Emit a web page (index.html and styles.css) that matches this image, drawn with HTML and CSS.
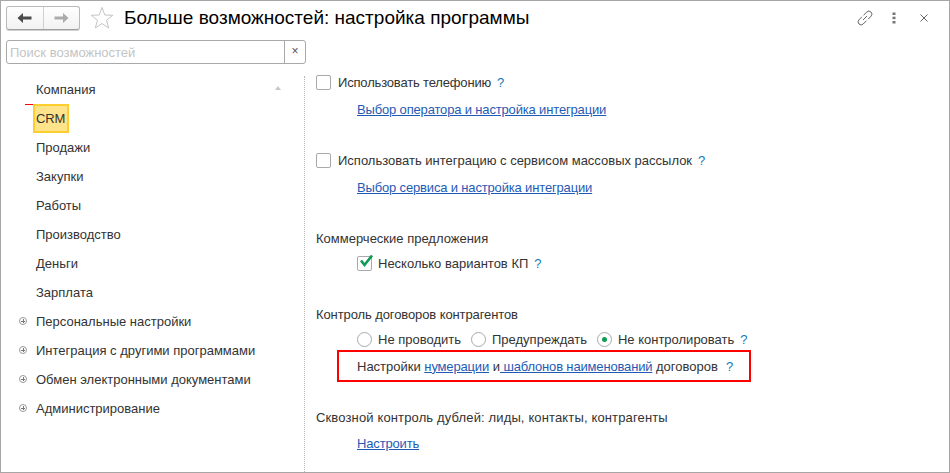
FILE: index.html
```html
<!DOCTYPE html>
<html lang="ru">
<head>
<meta charset="utf-8">
<title>Больше возможностей: настройка программы</title>
<link rel="stylesheet" href="styles.css">
</head>
<body>
<div class="window">
  <header class="titlebar">
    <div class="navgroup">
      <button class="navbtn" aria-label="Назад"><svg width="16" height="12" viewBox="0 0 16 12"><path d="M0.5 6 L6 1 V4.5 H14.5 V7.5 H6 V11 Z" fill="#4a4a4a"/></svg></button>
      <button class="navbtn navbtn-last" aria-label="Вперёд"><svg width="16" height="12" viewBox="0 0 16 12"><path d="M15.5 6 L10 1 V4.5 H1.5 V7.5 H10 V11 Z" fill="#ababab"/></svg></button>
    </div>
    <svg class="star" width="24" height="24" viewBox="0 0 24 24"><path d="M12 1.5 L14.8 9 L22.8 9.3 L16.5 14.2 L18.7 22 L12 17.5 L5.3 22 L7.5 14.2 L1.2 9.3 L9.2 9 Z" fill="none" stroke="#c4c4c4" stroke-width="1"/></svg>
    <h1 class="title">Больше возможностей: настройка программы</h1>
    <div class="tools">
      <svg width="16" height="16" viewBox="0 0 16 16"><path d="M6.6 5.2 L9.8 2 A2.6 2.6 0 0 1 14 6.2 L11.2 9.2 M9.4 10.8 L6.2 14 A2.6 2.6 0 0 1 2 9.8 L4.8 6.8 M6 10 L10 6" fill="none" stroke="#666" stroke-width="1"/></svg>
      <svg class="dots" width="4" height="12" viewBox="0 0 4 12"><rect x="0.5" y="0.5" width="3" height="2.5" fill="#777"/><rect x="0.5" y="4.7" width="3" height="2.5" fill="#777"/><rect x="0.5" y="9" width="3" height="2.5" fill="#777"/></svg>
      <svg class="close" width="8" height="8" viewBox="0 0 8 8"><path d="M0.5 0.5 L7.5 7.5 M7.5 0.5 L0.5 7.5" stroke="#666" stroke-width="1"/></svg>
    </div>
  </header>
  <div class="search">
    <span class="search-text">Поиск возможностей</span>
    <span class="search-clear">×</span>
  </div>
  <div class="panes">
    <nav class="nav">
      <span class="marker"></span>
      <span class="scroll-up"></span>
      <div class="nav-item">Компания</div>
      <div class="nav-item"><span class="current">CRM</span></div>
      <div class="nav-item">Продажи</div>
      <div class="nav-item">Закупки</div>
      <div class="nav-item">Работы</div>
      <div class="nav-item">Производство</div>
      <div class="nav-item">Деньги</div>
      <div class="nav-item">Зарплата</div>
      <div class="nav-item has-plus"><span class="plus"></span>Персональные настройки</div>
      <div class="nav-item has-plus"><span class="plus"></span>Интеграция с другими программами</div>
      <div class="nav-item has-plus"><span class="plus"></span>Обмен электронными документами</div>
      <div class="nav-item has-plus"><span class="plus"></span>Администрирование</div>
    </nav>
    <main class="content">
      <div class="row"><span class="check"></span><span class="tight">Использовать телефонию</span><span class="help">?</span></div>
      <div class="row sub gap-link"><a href="#">Выбор оператора и настройка интеграции</a></div>
      <div class="row gap-section"><span class="check"></span>Использовать интеграцию с сервисом массовых рассылок<span class="help">?</span></div>
      <div class="row sub gap-link"><a href="#">Выбор сервиса и настройка интеграции</a></div>
      <div class="row gap-section">Коммерческие предложения</div>
      <div class="row sub gap-tight">
        <span class="check check-close checked"><svg width="16" height="15" viewBox="0 0 16 15"><path d="M3 6.5 L6.5 11 L14 1.5" fill="none" stroke="#0d9a54" stroke-width="2.6"/></svg></span>Несколько вариантов КП<span class="help">?</span>
      </div>
      <div class="row gap-section tight-slight">Контроль договоров контрагентов</div>
      <div class="row sub gap-tight radios">
        <span class="radio"></span><span class="radio-label">Не проводить</span>
        <span class="radio"></span><span class="radio-label">Предупреждать</span>
        <span class="radio on"></span><span>Не контролировать</span><span class="help">?</span>
      </div>
      <div class="highlight">Настройки <a href="#">нумерации</a> и<a href="#"> шаблонов наименований</a> договоров<span class="help help-wide">?</span></div>
      <div class="row gap-last loose">Сквозной контроль дублей: лиды, контакты, контрагенты</div>
      <div class="row sub gap-link-last"><a href="#">Настроить</a></div>
    </main>
  </div>
</div>
</body>
</html>
```

FILE: styles.css
```css
* { box-sizing: border-box; }
html, body { margin: 0; padding: 0; height: 100%; background: #fff; }
body { font-family: "Liberation Sans", Arial, sans-serif; font-size: 13px; color: #333; overflow: hidden; }

.window {
  width: 950px; height: 473px;
  border: 1px solid #a6a6a6;
  display: flex; flex-direction: column;
}

.titlebar { display: flex; align-items: center; height: 34px; padding-left: 5px; flex: none; }
.navgroup {
  display: flex; width: 74px; height: 24px;
  border: 1px solid #b9b9b9; border-bottom-color: #9f9f9f; border-radius: 3px;
  background: linear-gradient(#fff, #f2f2f2);
  box-shadow: 0 1px 0 #d0d0d0;
}
.navbtn { flex: 1; border: 0; padding: 0; background: none; display: flex; align-items: center; justify-content: center; }
.navbtn-last { border-left: 1px solid #d0d0d0; }
.star { margin-left: 10px; flex: none; }
.title { margin: 0 0 0 10px; font-size: 19px; font-weight: normal; color: #000; white-space: nowrap; }
.tools { margin-left: auto; display: flex; align-items: center; padding-right: 21px; }
.dots { margin-left: 19px; }
.close { margin-left: 24px; }

.search {
  margin: 5px 0 0 5px; width: 300px; height: 24px; flex: none;
  border: 1px solid #a9a9a9; border-radius: 3px;
  display: flex; align-items: center; justify-content: space-between;
}
.search-text { padding-left: 3px; color: #c4c4c4; font-size: 13px; }
.search-clear { width: 21px; height: 22px; border-left: 1px solid #a9a9a9; text-align: center; line-height: 21px; color: #555; font-size: 12px; }

.panes { flex: 1; display: flex; min-height: 0; margin-top: 10px; }

.nav { width: 304px; flex: none; position: relative; margin-top: 2px; border-right: 1px dotted #b5b5b5; }
.nav-item { height: 29px; line-height: 29px; padding-left: 35px; position: relative; white-space: nowrap; color: #333; }
.nav-item:first-of-type { margin-top: -1px; }
.has-plus .plus {
  position: absolute; left: 18px; top: 10px; width: 8px; height: 8px;
  border: 1px solid #9a9a9a; border-radius: 50%;
  background:
    linear-gradient(#777, #777) center / 4px 1px no-repeat,
    linear-gradient(#777, #777) center / 1px 4px no-repeat;
}
.current {
  display: inline-block; width: 36px; height: 29px; line-height: 25px; margin-left: -3px; padding-left: 1px;
  background: #ffe38a; border: 2px solid #fdcf2e; color: #333; vertical-align: top;
  letter-spacing: -0.2px; white-space: nowrap;
}
.marker { position: absolute; left: 24px; top: 28px; width: 8px; height: 1px; background: #f00; }
.scroll-up {
  position: absolute; left: 274px; top: 10px; width: 0; height: 0;
  border: 3px solid transparent; border-top: 0; border-bottom: 4px solid #c8c8c8;
}

.content { flex: 1; padding-left: 11px; }
.row { display: flex; align-items: center; height: 16px; white-space: pre; }
.sub { padding-left: 41px; }
.gap-link { margin-top: 11px; }
.gap-link-last { margin-top: 10px; }
.gap-section { margin-top: 35px; }
.gap-tight { margin-top: 9px; }
.gap-last { margin-top: 27px; }
.tight { letter-spacing: -0.17px; }
.tight-slight { letter-spacing: -0.1px; }
.loose { letter-spacing: 0.14px; }
.check {
  width: 15px; height: 15px; margin-right: 7px; flex: none; position: relative;
  border: 1px solid #a9a9a9; border-radius: 2px; background: #fff;
}
.check-close { margin-right: 6px; }
.check svg { position: absolute; left: 0; top: -3px; }
.help { color: #1577b8; margin-left: 6px; }
.help-wide { margin-left: 8px; }
a { color: #1f5bb5; text-decoration: underline; letter-spacing: -0.16px; }
.radio {
  width: 15px; height: 15px; margin-right: 6px; flex: none; position: relative;
  border: 1px solid #a9a9a9; border-radius: 50%; background: #fff;
}
.radio.on::after {
  content: ""; position: absolute; left: 4px; top: 4px; width: 5px; height: 5px;
  border-radius: 50%; background: #0d9a54;
}
.radio-label { margin-right: 10px; }
.highlight {
  width: 414px; height: 32px; margin-top: 3px; margin-left: 21px;
  border: 2px solid #f00; padding-left: 18px;
  display: flex; align-items: center; white-space: pre;
}
```
